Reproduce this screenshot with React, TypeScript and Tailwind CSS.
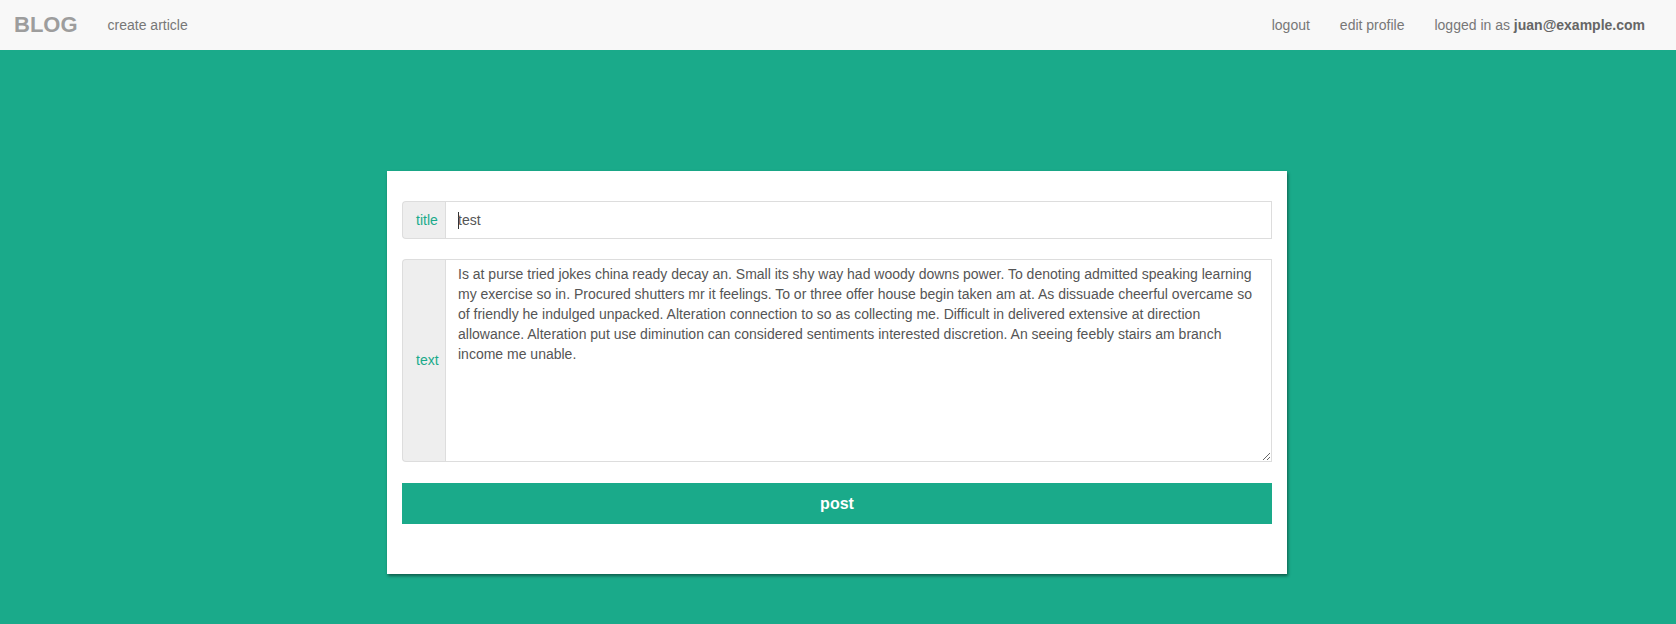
import React from "react";

const articleText =
  "Is at purse tried jokes china ready decay an. Small its shy way had woody downs power. To denoting admitted speaking learning my exercise so in. Procured shutters mr it feelings. To or three offer house begin taken am at. As dissuade cheerful overcame so of friendly he indulged unpacked. Alteration connection to so as collecting me. Difficult in delivered extensive at direction allowance. Alteration put use diminution can considered sentiments interested discretion. An seeing feebly stairs am branch income me unable.";

function Navbar() {
  return (
    <nav className="h-[50px] bg-[#f8f8f8] flex items-center justify-between pl-[14px] pr-[31px] text-[14px] text-[#777]">
      <div className="flex items-center">
        <span className="text-[22px] font-bold text-[#9d9d9d] leading-none">BLOG</span>
        <a className="ml-[30px]">create article</a>
      </div>
      <div className="flex items-center gap-[30px]">
        <a>logout</a>
        <a>edit profile</a>
        <span>
          logged in as <b className="text-[#666]">juan@example.com</b>
        </span>
      </div>
    </nav>
  );
}

function ArticleForm() {
  return (
    <div className="w-[900px] bg-white px-[15px] pt-[30px] pb-[50px] shadow-[1px_2px_3px_rgba(0,0,0,0.45)]">
      {/* title */}
      <div className="flex h-[38px]">
        <div className="w-[43px] shrink-0 flex items-center pl-[13px] bg-[#eee] border border-r-0 border-[#ddd] rounded-l-[4px] text-[14px] text-[#1aaa8a]">
          title
        </div>
        <div className="flex-1 flex items-center border border-[#ddd] px-3 text-[14px] text-[#555]">
          <span className="w-px h-[17px] bg-[#333] -mr-px"></span>
          test
        </div>
      </div>

      {/* text */}
      <div className="flex h-[203px] mt-[20px]">
        <div className="w-[43px] shrink-0 flex items-center pl-[13px] bg-[#eee] border border-r-0 border-[#ddd] rounded-l-[4px] text-[14px] text-[#1aaa8a]">
          text
        </div>
        <textarea
          className="flex-1 border border-[#ddd] px-3 py-[4px] text-[14px] leading-[20px] text-[#555] outline-none"
          defaultValue={articleText}
        />
      </div>

      <button className="mt-[21px] w-full h-[41px] bg-[#1aaa8a] text-white text-[16px] font-bold">
        post
      </button>
    </div>
  );
}

export default function App() {
  return (
    <div className="min-h-screen bg-[#1aaa8a] font-['Liberation_Sans',Arial,sans-serif]">
      <Navbar />
      <main className="flex justify-center pt-[121px] pr-[2px]">
        <ArticleForm />
      </main>
    </div>
  );
}
